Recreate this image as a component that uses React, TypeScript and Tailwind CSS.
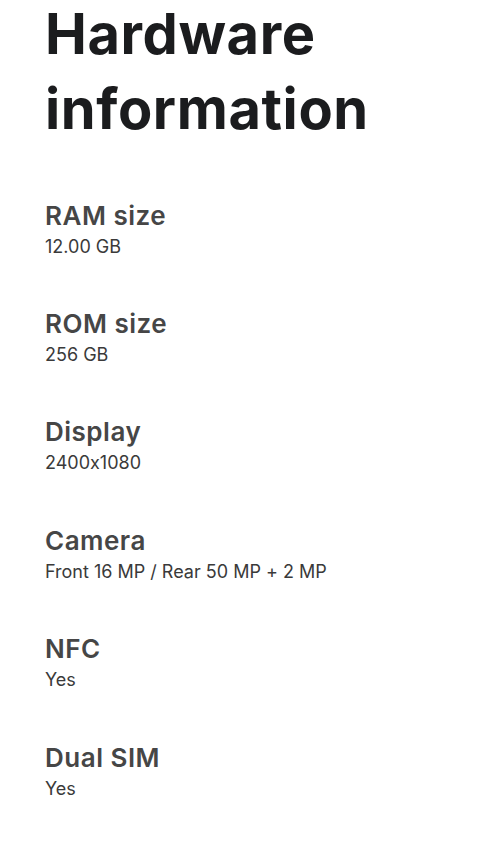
import React from "react";

interface Spec {
  label: string;
  value: string;
}

const specs: Spec[] = [
  { label: "RAM size", value: "12.00 GB" },
  { label: "ROM size", value: "256 GB" },
  { label: "Display", value: "2400x1080" },
  { label: "Camera", value: "Front 16 MP / Rear 50 MP + 2 MP" },
  { label: "NFC", value: "Yes" },
  { label: "Dual SIM", value: "Yes" },
];

const App: React.FC = () => {
  return (
    <div className="min-h-screen bg-white px-[45px] font-['Inter',sans-serif] [font-feature-settings:'calt'_0] overflow-hidden">
      {/* Title */}
      <h1 className="-mt-[3px] text-[56px] leading-[75px] font-bold text-[#1b1c1e] tracking-[0.6px]">
        Hardware
        <br />
        information
      </h1>

      {/* Spec list */}
      <div className="flex flex-col gap-[46.4px] pt-[52.6px]">
        {specs.map((spec) => (
          <div key={spec.label} className="flex flex-col">
            <span className="text-[26px] leading-[32px] font-semibold text-[#464646] tracking-[0.5px]">
              {spec.label}
            </span>
            <span className="text-[18px] leading-[30px] text-[#3a3a3a]">
              {spec.value}
            </span>
          </div>
        ))}
      </div>
    </div>
  );
};

export default App;
